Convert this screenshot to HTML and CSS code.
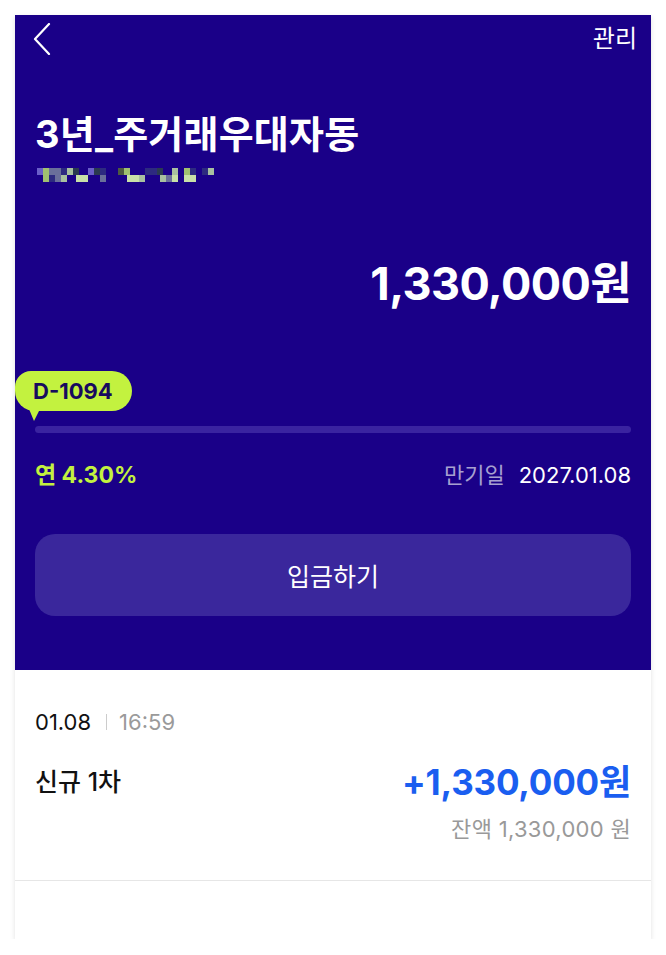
FILE: index.html
```html
<!DOCTYPE html>
<html lang="ko">
<head>
<meta charset="utf-8">
<link rel="stylesheet" href="styles.css">
</head>
<body>
<div class="card">
  <section class="hero">
    <header class="topbar">
      <svg class="back" width="20" height="32" viewBox="0 0 20 32"><path d="M17 1 L3 16 L17 31" fill="none" stroke="#fff" stroke-width="2.2" stroke-linecap="round" stroke-linejoin="round"/></svg>
      <span class="manage">관리</span>
    </header>
    <h1 class="title">3년_주거래우대자동</h1>
    <div class="masked">
      <div class="mrow">
        <i class="b c1"></i><i class="b c2"></i><i class="b c3 w2"></i><i class="b c4"></i><i class="b c5"></i><i class="b c6"></i><i class="gap"></i><i class="b c1"></i><i class="b c6"></i><i class="b c4"></i><i class="b c0 w2"></i><i class="b c7"></i><i class="b c2"></i><i class="gap"></i><i class="b c0"></i><i class="b c4 w2"></i><i class="b c6"></i><i class="gap"></i><i class="b c5"></i><i class="b c0"></i><i class="b c2"></i><i class="b c4"></i><i class="b c0"></i><i class="b c4"></i><i class="b c5"></i>
      </div>
      <div class="mrow">
        <i class="b c0"></i><i class="b c2"></i><i class="b c4"></i><i class="b c3"></i><i class="b c5"></i><i class="gap"></i><i class="b c8"></i><i class="b c8"></i><i class="b c0 w2"></i><i class="b c3"></i><i class="b c0"></i><i class="gap"></i><i class="b c0"></i><i class="b c8 w2"></i><i class="b c5"></i><i class="gap"></i><i class="b c0"></i><i class="b c5"></i><i class="b c3"></i><i class="b c8"></i><i class="b c0"></i><i class="b c8"></i><i class="b c8"></i>
      </div>
    </div>
    <div class="amount">1,330,000원</div>
    <div class="progress">
      <div class="badge">D-1094</div>
      <div class="track"></div>
    </div>
    <div class="info">
      <span class="rate">연 4.30%</span>
      <span class="maturity"><span class="mlabel">만기일</span><span class="mdate">2027.01.08</span></span>
    </div>
    <button class="deposit">입금하기</button>
  </section>
  <section class="history">
    <div class="when"><span class="date">01.08</span><span class="sep"></span><span class="time">16:59</span></div>
    <div class="row">
      <span class="desc">신규 1차</span>
      <span class="plus">+1,330,000원</span>
    </div>
    <div class="balance">잔액 1,330,000 원</div>
  </section>
  <div class="empty"></div>
</div>
</body>
</html>
```
FILE: styles.css
```css
* { box-sizing: border-box; }
html, body { margin: 0; padding: 0; background: #ffffff; }
body {
  padding: 15px 15px 0 15px;
  font-family: Inter, "Noto Sans CJK KR", "Noto Sans", sans-serif;
}
.card {
  width: 636px;
  background: #fff;
  box-shadow: 0 2px 5px rgba(0,0,0,0.12);
}
.hero {
  background: #1a0088;
  height: 655px;
  padding: 0 20px;
  display: flex;
  flex-direction: column;
  color: #fff;
}
.topbar {
  height: 54px;
  display: flex;
  justify-content: space-between;
  align-items: flex-start;
  padding-top: 8px;
}
.back { display: block; margin-left: -3px; }
.manage {
  font-size: 24px;
  line-height: 30px;
  margin-top: 1px;
  margin-right: -6px;
}
.title {
  margin: 40px 0 0 0;
  font-size: 38px;
  font-weight: 700;
  line-height: 50px;
  letter-spacing: 0.2px;
}
.masked { margin-top: 9px; display: flex; flex-direction: column; margin-left: 2px; }
.mrow { display: flex; height: 7px; }
.b { display: block; width: 6px; height: 7px; }
.w2 { width: 12px; }
.gap { display: block; width: 9px; }
.c0 { background: #1a0088; }
.c1 { background: #6a5ec8; }
.c2 { background: #a0c070; }
.c3 { background: #6a6f9a; }
.c4 { background: #2d2a80; }
.c5 { background: #a8c0a0; }
.c6 { background: #2a3a50; }
.c7 { background: #4f5a40; }
.c8 { background: #c8e0a8; }
.amount {
  margin-top: 74px;
  text-align: right;
  font-size: 45px;
  font-weight: 700;
  line-height: 56px;
  letter-spacing: -0.6px;
}
.progress {
  margin-top: 59px;
  display: flex;
  flex-direction: column;
}
.badge {
  position: relative;
  align-self: flex-start;
  margin-left: -20px;
  background: #c3f23f;
  color: #170b5e;
  font-size: 22px;
  font-weight: 700;
  line-height: 40px;
  height: 40px;
  padding: 0 19px 0 18px;
  border-radius: 16px 20px 20px 20px;
}
.badge::after {
  content: "";
  position: absolute;
  left: 14px;
  top: 38px;
  border-left: 5px solid transparent;
  border-right: 6px solid transparent;
  border-top: 12px solid #c3f23f;
}
.track {
  margin-top: 15px;
  height: 7px;
  border-radius: 4px;
  background: #3a23a0;
}
.info {
  margin-top: 24px;
  display: flex;
  justify-content: space-between;
  align-items: center;
  height: 32px;
}
.rate { color: #c3f23f; font-size: 23px; font-weight: 700; letter-spacing: 0; }
.maturity { font-size: 22px; }
.mlabel { color: #a7a0d0; margin-right: 14px; }
.mdate { color: #fff; letter-spacing: 0; }
.deposit {
  margin-top: 45px;
  height: 82px;
  border: none;
  border-radius: 20px;
  background: #3a279c;
  color: #fff;
  font-family: inherit;
  font-size: 25px;
}
.history {
  padding: 37px 20px 0 20px;
  height: 211px;
  border-bottom: 1px solid #e6e6e6;
}
.when { display: flex; align-items: center; font-size: 22px; line-height: 30px; }
.date { color: #111; }
.sep { width: 1px; height: 16px; background: #ccc; margin: 0 12px 0 15px; }
.time { color: #9a9a9a; }
.row {
  margin-top: 17px;
  display: flex;
  justify-content: space-between;
  align-items: center;
}
.desc { font-size: 25px; color: #111; font-weight: 500; }
.plus { font-size: 35px; font-weight: 700; color: #1a5ef0; letter-spacing: -0.2px; }
.balance { margin-top: 6px; text-align: right; font-size: 22px; color: #999; letter-spacing: 0.3px; }
.empty { height: 58px; }
```
